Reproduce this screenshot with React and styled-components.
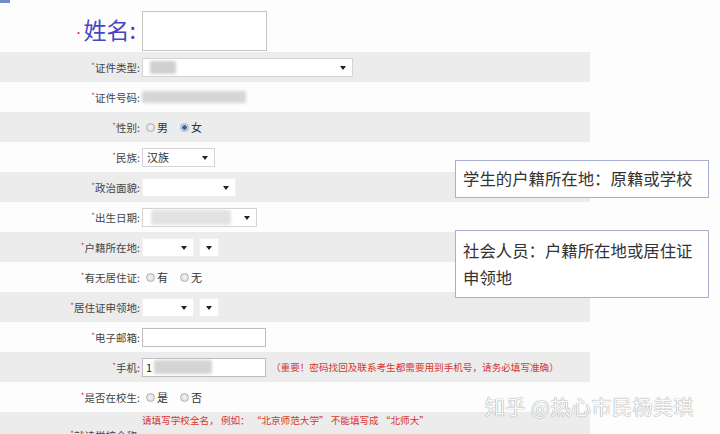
import React from 'react'
import styled, { createGlobalStyle } from 'styled-components'

const Global = createGlobalStyle`
  html, body {
    margin: 0;
    padding: 0;
    background: #fdfdfd;
  }
  body {
    font-family: "Noto Sans CJK SC", "Liberation Sans", sans-serif;
  }
`

const Page = styled.div`
  position: relative;
  width: 720px;
  height: 434px;
  overflow: hidden;
  background: #fdfdfd;
`

const NameRow = styled.div`
  display: grid;
  grid-template-columns: 142px 125px;
  align-items: start;
  height: 52px;
  width: 590px;
`

const NameLabel = styled.div`
  text-align: right;
  padding-right: 6px;
  padding-top: 18px;
  font-size: 23px;
  color: #4646c4;
  line-height: 1;
  & span {
    color: #d04040;
    font-size: 10px;
    vertical-align: middle;
  }
`

const NameBox = styled.div`
  height: 38px;
  margin-top: 11px;
  border: 1px solid #c4c4c4;
  background: #fff;
`

const Row = styled.div`
  display: grid;
  grid-template-columns: 142px 1fr;
  align-items: ${p => (p.$top ? 'start' : 'center')};
  height: 30px;
  width: 590px;
  background: ${p => (p.$shade ? '#ececec' : 'transparent')};
`

const Label = styled.div`
  text-align: right;
  padding-right: 2px;
  font-size: 10.5px;
  color: #444;
  white-space: nowrap;
  margin-top: ${p => p.$drop || 0}px;
  &::before {
    content: '*';
    color: #d04040;
    font-size: 8px;
    vertical-align: top;
  }
`

const Field = styled.div`
  display: flex;
  align-items: center;
  gap: ${p => p.$gap || 4}px;
  font-size: 10.5px;
  color: #333;
`

const Select = styled.div`
  position: relative;
  box-sizing: border-box;
  width: ${p => p.$w}px;
  height: 19px;
  background: #fff;
  border: 1px solid ${p => (p.$light ? '#f0f0f0' : '#d4d4d4')};
  display: flex;
  align-items: center;
  padding-left: 4px;
  font-size: 11px;
  color: #333;
  &::after {
    content: '';
    position: absolute;
    right: 6px;
    top: 7px;
    border-left: 3px solid transparent;
    border-right: 3px solid transparent;
    border-top: 4px solid #222;
  }
`

const Input = styled.div`
  box-sizing: border-box;
  width: 124px;
  height: 19px;
  background: #fff;
  border: 1px solid #bdbdbd;
  display: flex;
  align-items: center;
  padding-left: 3px;
  font-size: 11px;
  color: #222;
`

const Blur = styled.div`
  width: ${p => p.$w}px;
  height: ${p => p.$h}px;
  background: ${p => p.$c || '#d6d6d6'};
  filter: blur(1.5px);
  border-radius: 2px;
  margin-left: ${p => p.$ml || 0}px;
`

const Radio = styled.span`
  display: inline-block;
  box-sizing: border-box;
  width: 9px;
  height: 9px;
  border-radius: 50%;
  border: 1px solid #b0b0b0;
  background: ${p =>
    p.$on
      ? 'radial-gradient(circle, #3a5db8 0 2px, #cfd8ee 2.5px)'
      : 'radial-gradient(circle, #f4f4f4, #d8d8d8)'};
  margin-left: 4px;
`

const Opt = styled.span`
  font-size: 11px;
  color: #333;
  margin-right: 6px;
`

const Hint = styled.span`
  color: #d7352c;
  font-size: 9.6px;
  white-space: nowrap;
  margin-left: ${p => p.$ml || 0}px;
  margin-top: ${p => p.$mt || 0}px;
`

const Note = styled.div`
  position: absolute;
  left: 455px;
  top: ${p => p.$top}px;
  width: 254px;
  box-sizing: border-box;
  padding: ${p => p.$pad};
  border: 1px solid #a8aed0;
  background: #fff;
  font-size: 16.4px;
  line-height: 27px;
  color: #333;
`

const Mark = styled.div`
  position: absolute;
  left: 485px;
  top: 392px;
  font-size: 20px;
  letter-spacing: 0.5px;
  color: #fbfbfb;
  text-shadow: 0 0 1px #9a9a9a, 0 0 1px #9a9a9a;
  white-space: nowrap;
`

const TopTab = styled.div`
  position: absolute;
  left: 0;
  top: 0;
  width: 10px;
  height: 3px;
  background: #6c8fc8;
`

const radios = (a, b, on) => (
  <Field $gap={2}>
    <Radio $on={on === 0} />
    <Opt>{a}</Opt>
    <Radio $on={on === 1} />
    <Opt>{b}</Opt>
  </Field>
)

const pair = (
  <Field $gap={5}>
    <Select $w={52} $light />
    <Select $w={20} $light />
  </Field>
)

export default function App() {
  return (
    <Page>
      <Global />
      <TopTab />
      <NameRow>
        <NameLabel><span>•</span>姓名:</NameLabel>
        <NameBox />
      </NameRow>
      <Row $shade>
        <Label>证件类型:</Label>
        <Field>
          <Select $w={211}><Blur $w={26} $h={13} $c="#cfcfcf" $ml={3} /></Select>
        </Field>
      </Row>
      <Row>
        <Label>证件号码:</Label>
        <Field><Blur $w={104} $h={12} /></Field>
      </Row>
      <Row $shade>
        <Label>性别:</Label>
        {radios('男', '女', 1)}
      </Row>
      <Row>
        <Label>民族:</Label>
        <Field><Select $w={73}>汉族</Select></Field>
      </Row>
      <Row $shade>
        <Label>政治面貌:</Label>
        <Field><Select $w={94} $light /></Field>
      </Row>
      <Row>
        <Label>出生日期:</Label>
        <Field>
          <Select $w={115}><Blur $w={80} $h={15} $c="#e2e2e2" $ml={4} /></Select>
        </Field>
      </Row>
      <Row $shade>
        <Label>户籍所在地:</Label>
        {pair}
      </Row>
      <Row>
        <Label>有无居住证:</Label>
        {radios('有', '无', -1)}
      </Row>
      <Row $shade>
        <Label>居住证申领地:</Label>
        {pair}
      </Row>
      <Row>
        <Label>电子邮箱:</Label>
        <Field><Input /></Field>
      </Row>
      <Row $shade>
        <Label>手机:</Label>
        <Field>
          <Input>1<Blur $w={58} $h={14} $c="#d4d4d4" $ml={2} /></Input>
          <Hint $ml={1}>（重要！密码找回及联系考生都需要用到手机号，请务必填写准确）</Hint>
        </Field>
      </Row>
      <Row>
        <Label>是否在校生:</Label>
        {radios('是', '否', -1)}
      </Row>
      <Row $shade $top>
        <Label $drop={16}>就读学校全称:</Label>
        <Field>
          <Hint $mt={1}>请填写学校全名，  例如：  “北京师范大学” 不能填写成 “北师大”</Hint>
        </Field>
      </Row>
      <Note $top={160} $pad="4px 7px 5px">学生的户籍所在地：原籍或学校</Note>
      <Note $top={230} $pad="6px 7px 6px">社会人员：户籍所在地或居住证申领地</Note>
      <Mark>知乎 @热心市民杨美琪</Mark>
    </Page>
  )
}
